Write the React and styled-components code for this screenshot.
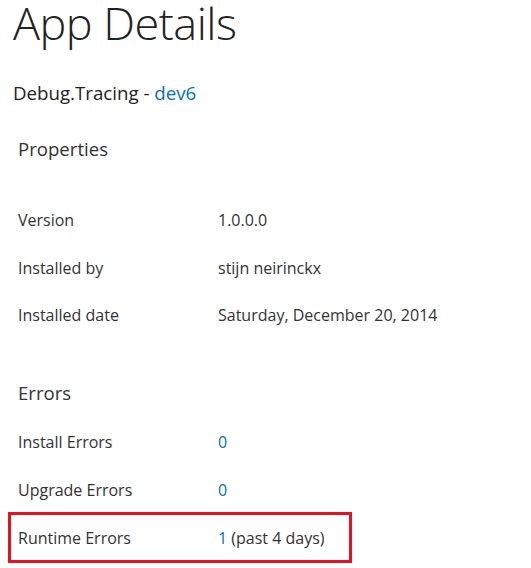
import React from 'react'
import styled, { createGlobalStyle } from 'styled-components'

const GlobalStyle = createGlobalStyle`
  html, body {
    margin: 0;
    padding: 0;
    background: #fff;
  }
  body {
    font-family: "Open Sans", "Noto Sans", "Liberation Sans", sans-serif;
    color: #333;
  }
`

const Page = styled.div`
  width: 531px;
`

const Title = styled.h1`
  margin: 0;
  padding: 0 0 0 13px;
  font-weight: 300;
  font-size: 45px;
  line-height: 46px;
  color: #222;
  letter-spacing: -0.5px;
`

const Subtitle = styled.div`
  margin-top: 34px;
  padding-left: 13px;
  font-size: 18.7px;
  color: #222;
  a {
    color: #0072c6;
    text-decoration: none;
  }
`

const Section = styled.section`
  padding-left: 18px;
  margin-top: ${p => p.$gap}px;
`

const SectionTitle = styled.h2`
  margin: 0;
  font-weight: 400;
  font-size: 18.6px;
  color: #333;
`

const Rows = styled.div`
  display: flex;
  flex-direction: column;
  gap: 23.5px;
  margin-top: ${p => p.$top}px;
`

const Row = styled.div`
  display: grid;
  grid-template-columns: 200px auto;
  font-size: 16px;
  line-height: 24px;
  color: #333;
`

const Highlight = styled.div`
  box-sizing: border-box;
  margin: -13.5px 0 0 -10px;
  width: 344px;
  padding: 11px 0 10px 7px;
  border: 3px solid #e81123;
`

const Link = styled.span`
  color: #0072c6;
`

export default function App() {
  return (
    <Page>
      <GlobalStyle />
      <Title>App Details</Title>
      <Subtitle>
        Debug.Tracing - <a href="#">dev6</a>
      </Subtitle>
      <Section $gap={31}>
        <SectionTitle>Properties</SectionTitle>
        <Rows $top={47}>
          <Row><span>Version</span><span>1.0.0.0</span></Row>
          <Row><span>Installed by</span><span>stijn neirinckx</span></Row>
          <Row><span>Installed date</span><span>Saturday, December 20, 2014</span></Row>
        </Rows>
      </Section>
      <Section $gap={53}>
        <SectionTitle>Errors</SectionTitle>
        <Rows $top={25}>
          <Row><span>Install Errors</span><Link>0</Link></Row>
          <Row><span>Upgrade Errors</span><Link>0</Link></Row>
          <Highlight>
            <Row><span>Runtime Errors</span><span><Link>1</Link> (past 4 days)</span></Row>
          </Highlight>
        </Rows>
      </Section>
    </Page>
  )
}
